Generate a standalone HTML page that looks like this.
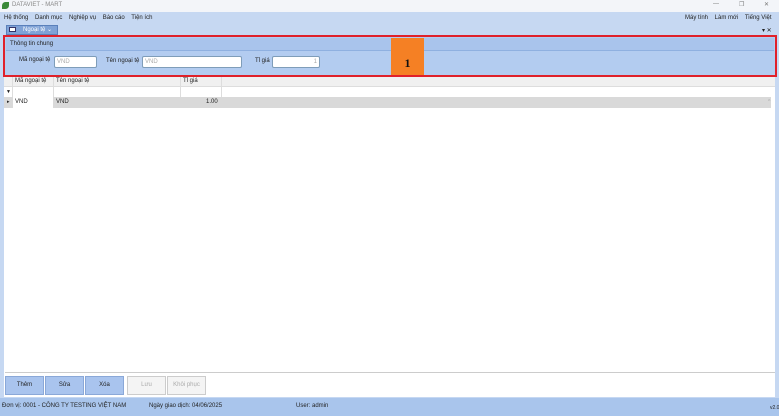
<!DOCTYPE html>
<html><head><meta charset="utf-8"><style>
*{margin:0;padding:0;box-sizing:border-box}
body{width:779px;height:416px;position:relative;overflow:hidden;font-family:"Liberation Sans",sans-serif;font-size:6px;color:#222;background:#fff}
.a{position:absolute;white-space:nowrap}
.inp{position:absolute;height:12px;background:#fff;border:1px solid #7f9db9;border-radius:2px;color:#aaa;padding:2px 2px;font-size:6px}
.btn{position:absolute;top:376px;height:19px;width:39px;border:1px solid #8aa8d8;background:#a9c4ee;text-align:center;line-height:17px}
.dis{background:#f4f4f4;border-color:#ccc;color:#aaa}
</style></head><body>
<div class="a" style="left:0;top:0;width:779px;height:12px;background:#f3f5f9"></div>
<div class="a" style="left:2px;top:2px;width:7px;height:7px;background:#3a8a3a;border-radius:50% 0"></div>
<div class="a" style="left:12px;top:2px;color:#888">DATAVIET - MART</div>
<div class="a" style="left:713px;top:1px;color:#777">—</div>
<div class="a" style="left:739px;top:1px;color:#777">❐</div>
<div class="a" style="left:764px;top:1px;color:#777">✕</div>
<div class="a" style="left:0;top:12px;width:779px;height:386px;background:#c6d8f2"></div>
<div class="a" style="left:4px;top:15px">Hệ thống &nbsp;&nbsp; Danh mục &nbsp;&nbsp; Nghiệp vụ &nbsp;&nbsp; Báo cáo &nbsp;&nbsp; Tiện ích</div>
<div class="a" style="left:685px;top:15px">Máy tính &nbsp;&nbsp; Làm mới &nbsp;&nbsp; Tiếng Việt</div>
<div class="a" style="left:6px;top:25px;width:52px;height:10px;background:#7fa2d6;border:1px solid #5a80bb;color:#fff;padding-left:16px;line-height:8px">Ngoại tệ ⌄</div>
<div class="a" style="left:9px;top:27px;width:7px;height:5px;background:#fff;border:1px solid #336"></div>
<div class="a" style="left:762px;top:27px;font-size:6px">▾ ✕</div>
<div class="a" style="left:4px;top:36px;width:771px;height:361px;background:#fff"></div>
<div class="a" style="left:4px;top:36px;width:771px;height:41px;background:#b3ccf0"></div>
<div class="a" style="left:6px;top:38px;width:768px;height:13px;background:#a9c4ec;border-bottom:1px solid #8fb0e0"></div>
<div class="a" style="left:10px;top:41px">Thông tin chung</div>
<div class="a" style="left:19px;top:57px">Mã ngoại tệ</div>
<div class="inp" style="left:54px;top:56px;width:43px">VND</div>
<div class="a" style="left:106px;top:58px">Tên ngoại tệ</div>
<div class="inp" style="left:142px;top:56px;width:100px">VND</div>
<div class="a" style="left:255px;top:58px">Tỉ giá</div>
<div class="inp" style="left:272px;top:56px;width:48px;text-align:right">1</div>
<div class="a" style="left:391px;top:38px;width:33px;height:38px;background:#f58024;font-family:'Liberation Serif',serif;font-weight:bold;font-size:12px;text-align:center;padding-top:18px;color:#111">1</div>
<div class="a" style="left:3px;top:35px;width:774px;height:42px;border:2px solid #e0202a"></div>
<div class="a" style="left:4px;top:77px;width:771px;height:10px;background:#f0f0f0;border-bottom:1px solid #ddd"></div>
<div class="a" style="left:15px;top:78px">Mã ngoại tệ</div>
<div class="a" style="left:56px;top:78px">Tên ngoại tệ</div>
<div class="a" style="left:183px;top:78px">Tỉ giá</div>
<div class="a" style="left:53px;top:77px;width:1px;height:31px;background:#ddd"></div>
<div class="a" style="left:180px;top:77px;width:1px;height:31px;background:#ddd"></div>
<div class="a" style="left:221px;top:77px;width:1px;height:20px;background:#ddd"></div>
<div class="a" style="left:12px;top:77px;width:1px;height:31px;background:#ddd"></div>
<div class="a" style="left:6px;top:89px;font-size:5px">▼</div>
<div class="a" style="left:4px;top:97px;width:767px;height:11px;background:#d9d9d9"></div>
<div class="a" style="left:13px;top:97px;width:40px;height:11px;background:#fff"></div>
<div class="a" style="left:7px;top:99px;font-size:5px">▸</div>
<div class="a" style="left:15px;top:99px">VND</div>
<div class="a" style="left:56px;top:99px">VND</div>
<div class="a" style="left:206px;top:99px">1.00</div>
<div class="a" style="left:768px;top:99px;color:#aaa;font-size:5px">^</div>
<div class="a" style="left:5px;top:372px;width:770px;height:1px;background:#ccc"></div>
<div class="btn" style="left:5px">Thêm</div>
<div class="btn" style="left:45px">Sửa</div>
<div class="btn" style="left:85px">Xóa</div>
<div class="btn dis" style="left:127px">Lưu</div>
<div class="btn dis" style="left:167px">Khôi phục</div>
<div class="a" style="left:0;top:398px;width:779px;height:18px;background:#a9c5ec"></div>
<div class="a" style="left:2px;top:403px">Đơn vị: 0001 - CÔNG TY TESTING VIỆT NAM</div>
<div class="a" style="left:149px;top:403px">Ngày giao dịch: 04/06/2025</div>
<div class="a" style="left:296px;top:403px">User: admin</div>
<div class="a" style="left:770px;top:405px;font-size:5px">v2.0</div>
</body></html>
